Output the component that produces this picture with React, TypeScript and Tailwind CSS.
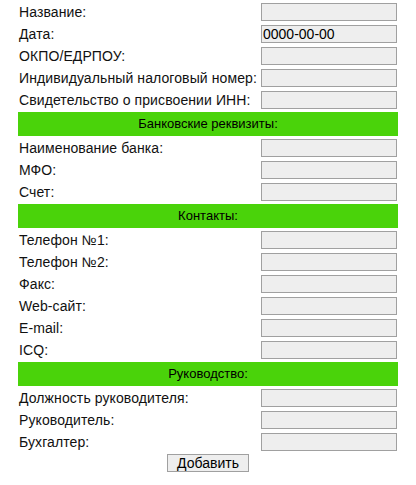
const sections: { title?: string; fields: { label: string; value?: string }[] }[] = [
  {
    fields: [
      { label: 'Название:' },
      { label: 'Дата:', value: '0000-00-00' },
      { label: 'ОКПО/ЕДРПОУ:' },
      { label: 'Индивидуальный налоговый номер:' },
      { label: 'Свидетельство о присвоении ИНН:' },
    ],
  },
  {
    title: 'Банковские реквизиты:',
    fields: [{ label: 'Наименование банка:' }, { label: 'МФО:' }, { label: 'Счет:' }],
  },
  {
    title: 'Контакты:',
    fields: [
      { label: 'Телефон №1:' },
      { label: 'Телефон №2:' },
      { label: 'Факс:' },
      { label: 'Web-сайт:' },
      { label: 'E-mail:' },
      { label: 'ICQ:' },
    ],
  },
  {
    title: 'Руководство:',
    fields: [{ label: 'Должность руководителя:' }, { label: 'Руководитель:' }, { label: 'Бухгалтер:' }],
  },
]

function Field({ label, value }: { label: string; value?: string }) {
  return (
    <div className="flex h-[20px] items-center justify-between">
      <label className="pl-[1px] text-[14px] leading-[18px] tracking-[0.1px] text-[#111]">{label}</label>
      <input
        type="text"
        defaultValue={value}
        className="mr-[1px] box-border h-[18px] w-[136px] border border-[#a0a0a0] bg-[#eeeeee] px-[1px] text-[14px] leading-[16px] text-black outline-none"
      />
    </div>
  )
}

export default function App() {
  return (
    <div className="h-screen bg-white font-['Liberation_Sans',Arial,sans-serif]">
      <form className="ml-[18px] flex w-[380px] flex-col gap-[2px] pt-[2px]">
        {sections.map((s, i) => (
          <div key={i} className="contents">
            {s.title && (
              <div className="flex h-[24px] items-center justify-center bg-[#4ad30a] text-[13px] text-black">
                {s.title}
              </div>
            )}
            {s.fields.map((f) => (
              <Field key={f.label} label={f.label} value={f.value} />
            ))}
          </div>
        ))}
        <div className="flex justify-center">
          <button
            type="button"
            className="box-border h-[18px] w-[82px] border border-[#a0a0a0] bg-[#eeeeee] text-[14px] leading-[16px] text-black"
          >
            Добавить
          </button>
        </div>
      </form>
    </div>
  )
}
